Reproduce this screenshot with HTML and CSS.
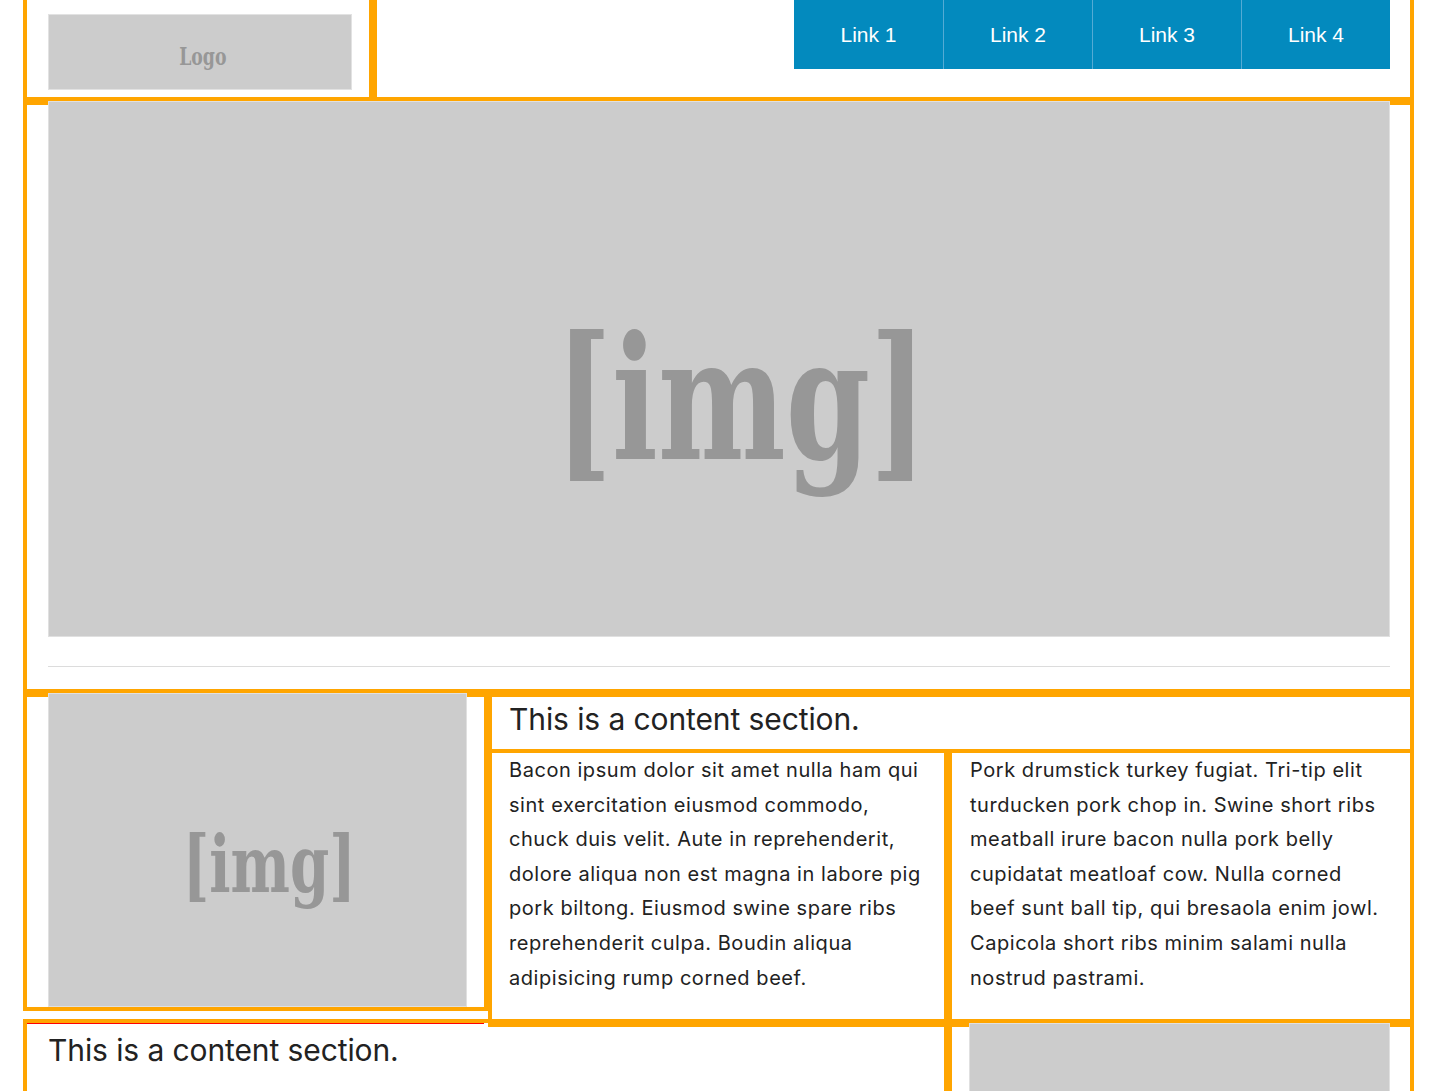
FILE: index.html
```html
<!DOCTYPE html>
<html lang="en">
<head>
<meta charset="utf-8">
<title>Layout</title>
<link rel="stylesheet" href="styles.css">
</head>
<body>
<div class="page">
  <header class="site-header">
    <div class="logo-col">
      <div class="logo"><span class="logo-text">Logo</span></div>
    </div>
    <nav class="nav">
      <a class="nav-link" href="#">Link 1</a>
      <a class="nav-link" href="#">Link 2</a>
      <a class="nav-link" href="#">Link 3</a>
      <a class="nav-link" href="#">Link 4</a>
    </nav>
  </header>

  <section class="hero">
    <div class="ph ph-hero"><span class="ph-label ph-label-lg">[img]</span></div>
    <hr class="rule">
  </section>

  <section class="content">
    <div class="content-row">
      <div class="box box-media">
        <div class="ph ph-media"><span class="ph-label ph-label-md">[img]</span></div>
      </div>
      <div class="content-main">
        <div class="box box-heading">
          <h2 class="section-title">This is a content section.</h2>
        </div>
        <div class="cols">
          <div class="box box-col box-col-a">
            <p class="copy">Bacon ipsum dolor sit amet nulla ham qui sint exercitation eiusmod commodo, chuck duis velit. Aute in reprehenderit, dolore aliqua non est magna in labore pig pork biltong. Eiusmod swine spare ribs reprehenderit culpa. Boudin aliqua adipisicing rump corned beef.</p>
          </div>
          <div class="box box-col box-col-b">
            <p class="copy">Pork drumstick turkey fugiat. Tri-tip elit turducken pork chop in. Swine short ribs meatball irure bacon nulla pork belly cupidatat meatloaf cow. Nulla corned beef sunt ball tip, qui bresaola enim jowl. Capicola short ribs minim salami nulla nostrud pastrami.</p>
          </div>
        </div>
      </div>
    </div>
    <div class="content-row content-row-foot">
      <div class="box box-foot">
        <h2 class="section-title">This is a content section.</h2>
      </div>
      <div class="box box-aside">
        <div class="ph ph-aside"></div>
      </div>
    </div>
  </section>
</div>
</body>
</html>
```

FILE: styles.css
```css
* {
  box-sizing: border-box;
}

html, body {
  margin: 0;
  padding: 0;
  background: #fff;
}

body {
  font-family: Inter, "Liberation Sans", Arial, sans-serif;
  color: #222;
  overflow: hidden;
}

.page {
  width: 1391px;
  margin-left: 23px;
}

/* ---------- header ---------- */
.site-header {
  display: flex;
  align-items: flex-start;
  height: 101px;
  border: 4px solid #ffa500;
  border-top: 0;
}

.logo-col {
  width: 350px;
  height: 97px;
  border-right: 8px solid #ffa500;
  padding: 14px 0 0 21px;
}

.logo {
  width: 304px;
  height: 76px;
  background: #ccc;
  border: 1px solid #e2e2e2;
  display: flex;
  align-items: center;
  justify-content: center;
  padding: 9px 0 0 6px;
}

.logo-text {
  display: inline-block;
  font-family: "DejaVu Serif", serif;
  font-weight: bold;
  font-size: 24px;
  line-height: 1;
  color: #979797;
  transform: scaleX(0.72);
}

.nav {
  display: flex;
  margin-left: auto;
  margin-right: 20px;
}

.nav-link {
  width: 149px;
  height: 69px;
  display: flex;
  align-items: center;
  justify-content: center;
  background: #038abe;
  color: #fff;
  font-family: "Liberation Sans", Arial, sans-serif;
  font-size: 21px;
  text-decoration: none;
}

.nav-link + .nav-link {
  border-left: 1px solid #55abd4;
}

/* ---------- placeholders ---------- */
.ph {
  background: #ccc;
  border: 1px solid #e0e0e0;
  display: flex;
  align-items: center;
  justify-content: center;
  overflow: hidden;
}

.ph-label {
  display: inline-block;
  font-family: "DejaVu Serif", serif;
  font-weight: bold;
  line-height: 1;
  color: #979797;
}

/* ---------- hero ---------- */
.hero {
  border: 4px solid #ffa500;
  padding: 0 20px 22px 21px;
}

.ph-hero {
  margin-top: -4px;
  height: 536px;
  padding: 60px 0 0 44px;
}

.ph-label-lg {
  font-size: 170px;
  transform: scaleX(0.71);
}

.rule {
  margin: 29px 0 0;
  height: 0;
  border: 0;
  border-top: 1px solid #dcdcdc;
}

/* ---------- content ---------- */
.content-row {
  display: flex;
  align-items: flex-start;
}

.box {
  border: 0 solid #ffa500;
  flex: none;
}

.box-media {
  width: 465px;
  border-width: 4px;
  padding: 0 17px 0 21px;
}

.ph-media {
  margin-top: -4px;
  height: 314px;
  padding: 29px 0 0 24px;
}

.ph-label-md {
  font-size: 78px;
  transform: scaleX(0.72);
}

.content-main {
  width: 926px;
  flex: none;
}

.box-heading {
  border-width: 4px;
  padding: 5px 17px 13px;
}

.section-title {
  margin: 0;
  font-size: 30px;
  font-weight: normal;
  line-height: 34px;
  letter-spacing: -0.1px;
  color: #222;
}

.cols {
  display: flex;
  align-items: flex-start;
}

.box-col {
  border-width: 0 4px 4px;
  padding: 0 17px 24px;
}

.box-col-a {
  width: 460px;
  border-bottom-width: 8px;
}

.box-col-b {
  width: 466px;
  padding: 0 18px 24px;
}

.copy {
  margin: 0;
  font-size: 20px;
  line-height: 34.6px;
  letter-spacing: 0.55px;
  color: #222;
}

.content-row-foot {
  margin-top: -8px;
}

.box-foot {
  width: 925px;
  height: 120px;
  border-width: 4px 4px 0;
  padding: 10px 21px 0;
}

.box-foot::before {
  content: "";
  display: block;
  width: 457px;
  height: 1px;
  margin: -10px 0 9px -21px;
  background: #f00;
}

.box-aside {
  width: 466px;
  height: 120px;
  margin-top: 4px;
  border-width: 4px 4px 0;
  padding: 0 20px 0 17px;
}

.ph-aside {
  margin-top: -4px;
  height: 200px;
}
```
